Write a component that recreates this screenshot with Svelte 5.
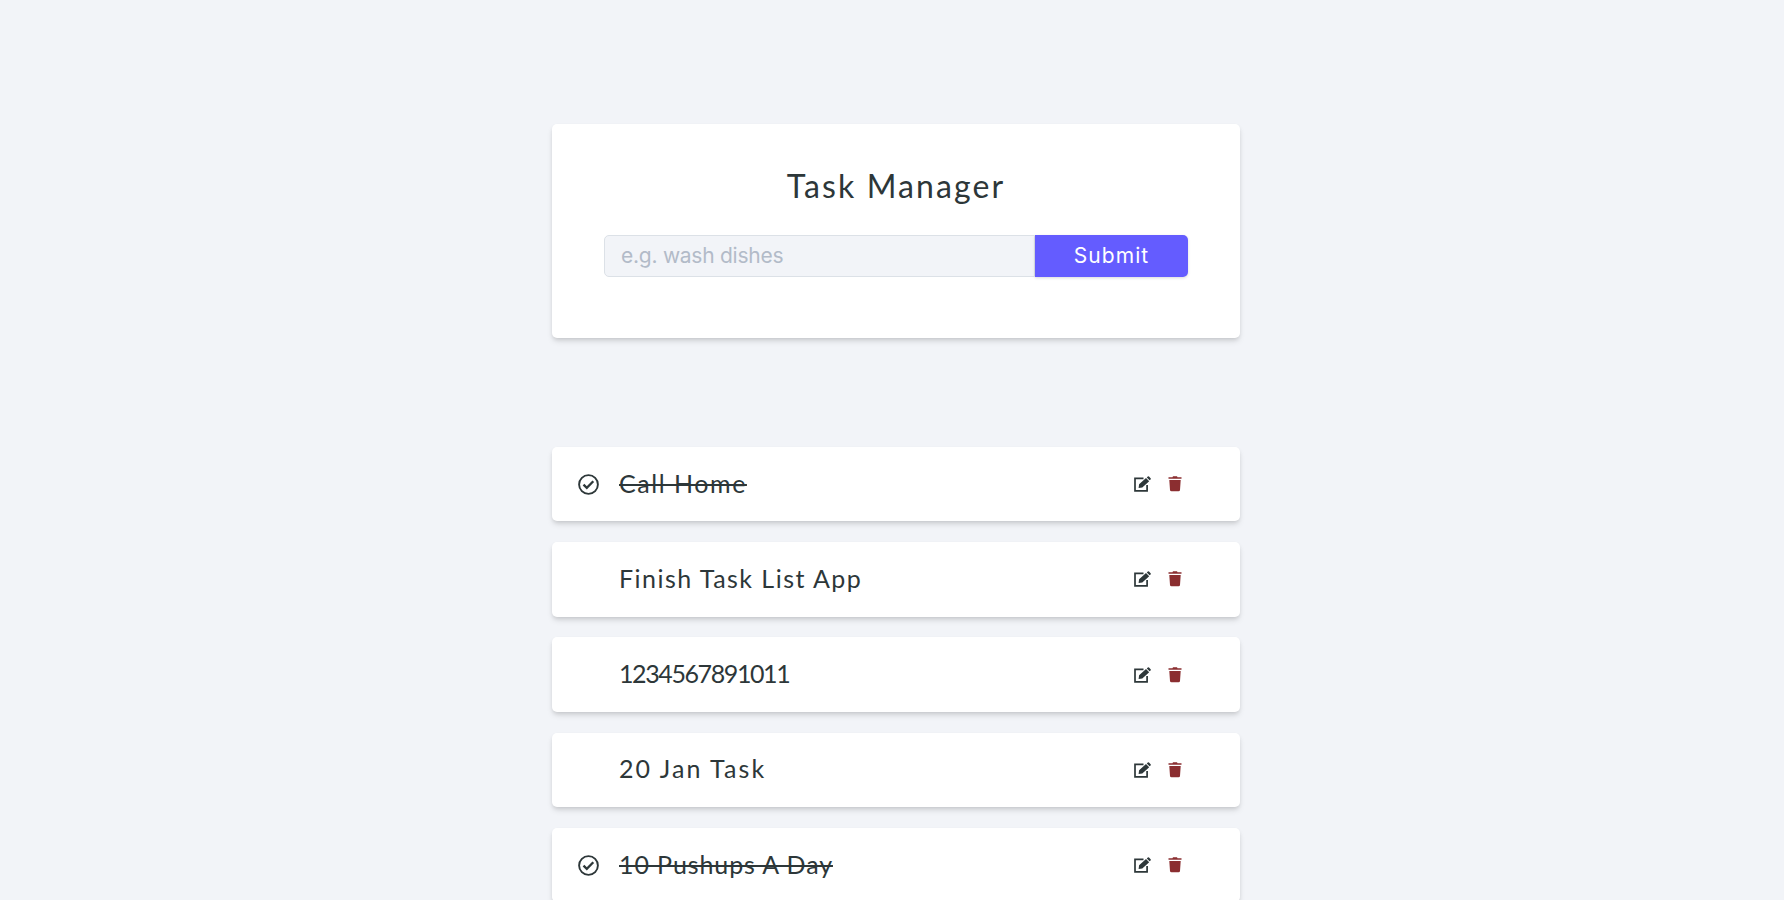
<script>
  let draft = $state('');
  let tasks = $state([
    { id: 1, name: 'Call Home', done: true, tracking: 1.55 },
    { id: 2, name: 'Finish Task List App', done: false, tracking: 1.47 },
    { id: 3, name: '1234567891011', done: false, tracking: -1.4 },
    { id: 4, name: '20 Jan Task', done: false, tracking: 2.05 },
    { id: 5, name: '10 Pushups A Day', done: true, tracking: 0.9 }
  ]);

  function addTask(event) {
    event.preventDefault();
    const name = draft.trim();
    if (!name) return;
    tasks.push({ id: Date.now(), name, done: false, tracking: 1.5 });
    draft = '';
  }

  function removeTask(id) {
    tasks = tasks.filter((task) => task.id !== id);
  }
</script>

<main>
  <form class="card" onsubmit={addTask}>
    <h1>Task Manager</h1>
    <div class="field">
      <input type="text" placeholder="e.g. wash dishes" bind:value={draft} />
      <button class="submit" type="submit">Submit</button>
    </div>
  </form>

  <section class="tasks">
    {#each tasks as task (task.id)}
      <article class="task">
        <span class="mark">
          {#if task.done}
            <svg class="check" viewBox="0 0 21 21" fill="none" stroke="currentColor">
              <circle cx="10.5" cy="10.5" r="9.4" stroke-width="1.9" />
              <path d="M5.5 10.6l3.3 3.2 6.5-6.5" stroke-width="2.3" />
            </svg>
          {/if}
        </span>
        <h2 class:done={task.done}>
          <span style="letter-spacing: {task.tracking}px">{task.name}</span>
        </h2>
        <div class="actions">
          <button class="icon edit" aria-label="Edit task">
            <svg width="17" height="16" viewBox="0 0 17 16">
              <path d="M9.5 2.3H1v12.6h12.1V9" fill="none" stroke="currentColor" stroke-width="1.7" />
              <path d="M4.6 12.1l.5-3.8 6.9-6.2 3.2 3.2-6.9 6.3z M12.8 1.5l1-.9q.6-.5 1.2 0l1.6 1.6q.5.6 0 1.2l-1 .9z" fill="currentColor" />
            </svg>
          </button>
          <button class="icon delete" aria-label="Delete task" onclick={() => removeTask(task.id)}>
            <svg width="14" height="16" viewBox="0 0 14 16">
              <path d="M.5 1.2h4L5 .3h4l.5.9h4v1.5H.5z M1.3 4.1h11.4l-.7 9.8q-.1 1.4-1.5 1.4h-7q-1.4 0-1.5-1.4z" fill="currentColor" />
            </svg>
          </button>
        </div>
      </article>
    {/each}
  </section>
</main>

<style>
  :global(body) {
    background: #f2f4f8;
    overflow: hidden;
  }

  main {
    box-sizing: border-box;
    height: 900px;
    padding: 124px 0 0 8px;
    overflow: hidden;
    color: #2d3739;
    font-family: Lato, "Open Sans", sans-serif;
  }

  .card,
  .task {
    box-sizing: border-box;
    width: 688px;
    margin: 0 auto;
    background: #fff;
    border-radius: 5px;
    box-shadow: 0 4px 6px -1px rgba(0, 0, 0, 0.12), 0 2px 4px -1px rgba(0, 0, 0, 0.1);
  }

  .card {
    height: 214px;
    padding: 38px 52px 0;
  }

  h1 {
    height: 48px;
    margin: 0 0 25px;
    font-size: 32px;
    font-weight: 400;
    line-height: 48px;
    letter-spacing: 2.1px;
    text-align: center;
    white-space: nowrap;
  }

  .field {
    display: grid;
    grid-template-columns: 431px 153px;
    height: 42px;
  }

  input,
  .submit {
    box-sizing: border-box;
    min-width: 0;
    margin: 0;
    font-family: Inter, sans-serif;
    font-size: 21px;
  }

  input {
    padding: 0 16px 2px;
    color: #2d3739;
    letter-spacing: -0.25px;
    background: #f2f4f8;
    border: 1px solid #dce1e7;
    border-radius: 5px 0 0 5px;
    outline: none;
  }

  input::placeholder {
    color: #b2bbc8;
    opacity: 1;
  }

  .submit {
    padding: 0 0 2px;
    color: #fff;
    letter-spacing: 1.1px;
    background: #645cff;
    border: 0;
    border-radius: 0 5px 5px 0;
    box-shadow: 0 1px 3px rgba(0, 0, 0, 0.15);
  }

  .tasks {
    display: grid;
    row-gap: 20.8px;
    margin-top: 108.8px;
  }

  .task {
    display: flex;
    align-items: center;
    height: 74.5px;
    padding: 0 58px 0 26px;
  }

  .mark {
    display: flex;
    width: 41px;
    flex: none;
  }

  .check {
    width: 21px;
    height: 21px;
  }

  h2 {
    flex: 1;
    margin: 0;
    padding-bottom: 3px;
    font-size: 25px;
    font-weight: 400;
    line-height: 36px;
    white-space: nowrap;
  }

  .done span {
    text-decoration: line-through;
    text-decoration-thickness: 2px;
  }

  .actions {
    display: flex;
    gap: 17px;
  }

  .icon {
    display: flex;
    padding: 0;
    color: inherit;
    background: none;
    border: 0;
  }

  .delete {
    color: #8b2e30;
  }
</style>
